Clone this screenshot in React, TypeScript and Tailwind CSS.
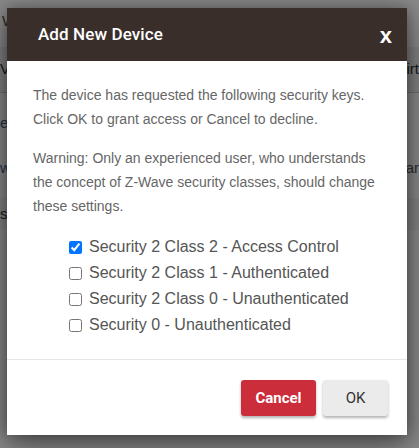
import React, { useState } from 'react';

const keys = [
  { id: 's2ac', label: 'Security 2 Class 2 - Access Control', checked: true },
  { id: 's2auth', label: 'Security 2 Class 1 - Authenticated', checked: false },
  { id: 's2unauth', label: 'Security 2 Class 0 - Unauthenticated', checked: false },
  { id: 's0', label: 'Security 0 - Unauthenticated', checked: false },
];

const PageBehind: React.FC = () => (
  <div className="flex flex-col text-[15px] text-[#3b5f8a] font-['Liberation_Sans',sans-serif]">
    <div className="h-[47px] px-[2px] pt-[10px] text-[#555]">Wo</div>
    <div className="h-[46px] flex items-center justify-between bg-[#f0f0f0] border-b border-[#ccc] text-[#333]">
      <span>V</span>
      <span>irt</span>
    </div>
    <div className="h-[60px] flex items-center">
      <span>e</span>
    </div>
    <div className="h-[30px] flex items-center justify-between">
      <span>wi</span>
      <span className="text-[#555]">tar</span>
    </div>
    <div className="mt-[15px] h-[32px] flex items-center bg-[#f4f4f4] text-[#333]">
      <span>s</span>
    </div>
  </div>
);

export default function App() {
  const [state, setState] = useState(keys.map((k) => k.checked));

  return (
    <div className="relative w-[419px] h-[448px] overflow-hidden bg-white">
      <PageBehind />
      <div className="absolute inset-0 bg-black/[0.46]" />
      <div className="absolute left-[7px] top-[8px] w-[400px] bg-white flex flex-col shadow-[0_10px_28px_rgba(0,0,0,0.45),0_0_14px_rgba(0,0,0,0.3)]">
        <div className="h-[53px] bg-[#3a2e2b] flex items-center justify-between pl-[31px] pr-[15px]">
          <span className="text-white text-[17px] font-medium font-['Roboto',sans-serif] tracking-[0.1px]">
            Add New Device
          </span>
          <span className="text-white text-[22px] font-bold font-['Liberation_Sans',sans-serif] leading-none mt-[2px]">
            x
          </span>
        </div>
        <div className="pt-[22px] pb-[21px] pl-[26px] pr-[20px] text-[14px] leading-[24px] text-[#666] font-['Liberation_Sans',sans-serif]">
          <p>
            The device has requested the following security keys.
            <br />
            Click OK to grant access or Cancel to decline.
          </p>
          <p className="mt-[15px]">
            Warning: Only an experienced user, who understands the concept of Z-Wave security classes, should
            change these settings.
          </p>
          <div className="mt-[16px] pl-[36px] flex flex-col">
            {keys.map((k, i) => (
              <label key={k.id} className="h-[26px] flex items-center gap-[7px] text-[16px] text-[#555]">
                <input
                  type="checkbox"
                  checked={state[i]}
                  onChange={() => setState(state.map((v, j) => (j === i ? !v : v)))}
                  className="w-[13px] h-[13px] m-0 accent-[#0075ff]"
                />
                {k.label}
              </label>
            ))}
          </div>
        </div>
        <div className="border-t border-[#e6e6e6] flex justify-end gap-[7px] pt-[20px] pb-[19px] pr-[19px] font-['Roboto',sans-serif]">
          <button className="w-[75px] h-[36px] rounded-[3px] bg-[#cb2d3b] text-white text-[15px] font-bold shadow-[0_2px_3px_rgba(0,0,0,0.3)]">
            Cancel
          </button>
          <button className="w-[65px] h-[36px] rounded-[3px] bg-[#ebebeb] text-[#333] text-[15px] shadow-[0_2px_3px_rgba(0,0,0,0.3)]">
            OK
          </button>
        </div>
      </div>
    </div>
  );
}
